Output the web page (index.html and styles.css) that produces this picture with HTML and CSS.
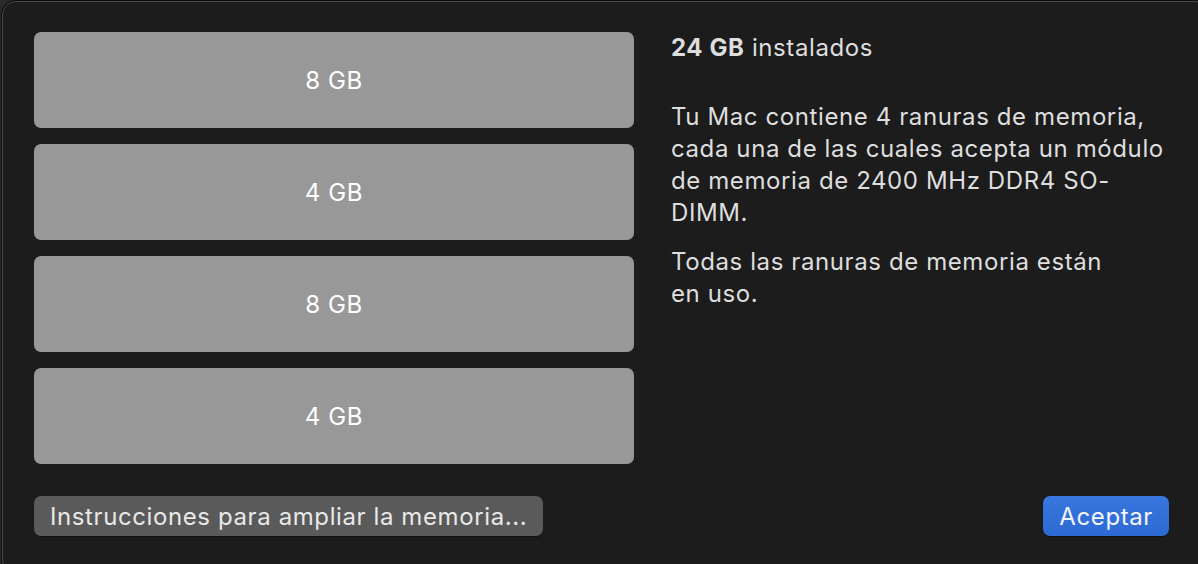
FILE: index.html
```html
<!DOCTYPE html>
<html lang="es">
<head>
  <meta charset="UTF-8" />
  <title>Memoria</title>
  <link rel="stylesheet" href="styles.css">
</head>
<body>
  <div class="dialog">
    <div class="slots">
      <div class="slot">8 GB</div>
      <div class="slot">4 GB</div>
      <div class="slot">8 GB</div>
      <div class="slot">4 GB</div>
    </div>
    <div class="info">
      <h2><b>24 GB</b> instalados</h2>
      <p>Tu Mac contiene 4 ranuras de memoria,<br>cada una de las cuales acepta un módulo<br>de memoria de 2400 MHz DDR4 SO-<br>DIMM.</p>
      <p>Todas las ranuras de memoria están<br>en uso.</p>
    </div>
    <div class="footer">
      <button class="btn">Instrucciones para ampliar la memoria...</button>
      <button class="btn primary">Aceptar</button>
    </div>
  </div>
</body>
</html>
```

FILE: styles.css
```css
body {
  margin: 0;
  background: #2a2a2a;
  font-family: "Inter", "Roboto", sans-serif;
  height: 564px;
  overflow: hidden;
}
.dialog {
  box-sizing: border-box;
  margin: 1px 0 0 2px;
  width: 1208px;
  height: 574px;
  background: #1c1c1c;
  border: 1px solid #4a4a4a;
  border-radius: 14px;
  box-shadow: 0 0 0 1px #0c0c0c;
  padding: 30px 0 0 31px;
  display: grid;
  grid-template-columns: 600px 520px;
  column-gap: 37px;
  grid-template-rows: 432px auto;
  row-gap: 32px;
  align-items: start;
  letter-spacing: 0.6px;
}
.slots {
  display: flex;
  flex-direction: column;
  gap: 16px;
}
.slot {
  height: 96px;
  background: #989898;
  border-radius: 7px;
  color: #fff;
  font-size: 24px;
  display: flex;
  align-items: center;
  justify-content: center;
}
.info {
  color: #dedede;
  font-size: 24px;
  line-height: 32px;
}
.info h2 {
  margin: 0 0 37px;
  font-size: 24px;
  font-weight: 400;
  line-height: 32px;
}
.info b {
  font-weight: 700;
}
.info p {
  margin: 0 0 17px;
}
.footer {
  grid-column: 1 / 3;
  display: flex;
  justify-content: space-between;
  align-items: center;
  width: 1135px;
}
.btn {
  font-family: inherit;
  font-size: 24px;
  letter-spacing: 0.6px;
  color: #e8e8e8;
  background: #5a5a5a;
  border: none;
  border-radius: 7px;
  height: 40px;
  padding: 0 16px;
  box-shadow: 0 0.5px 1px rgba(0,0,0,0.4);
}
.primary {
  background: linear-gradient(#3877df, #2d69d2);
  color: #f2f6ff;
  padding: 0 16px;
}
```
